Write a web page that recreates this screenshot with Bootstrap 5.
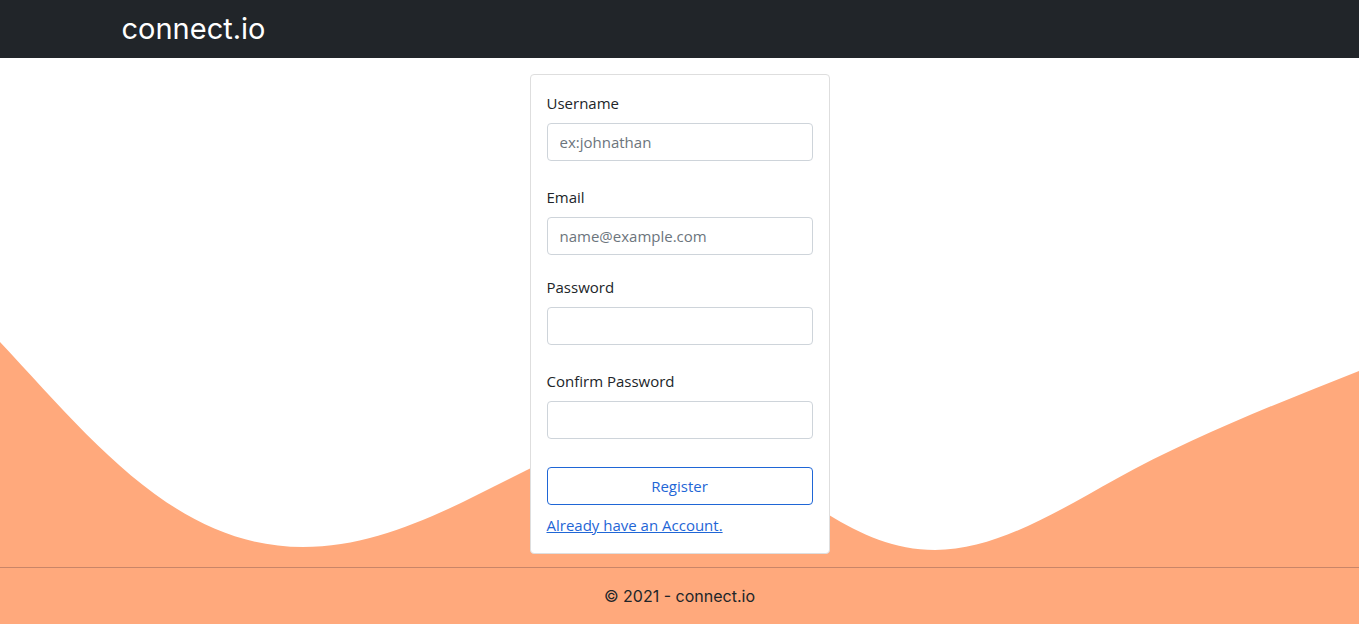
<!DOCTYPE html>
<html lang="en">
<head>
<meta charset="utf-8">
<meta name="viewport" content="width=device-width, initial-scale=1">
<title>Register - connect.io</title>
<link href="https://cdn.jsdelivr.net/npm/bootstrap@5.3.0/dist/css/bootstrap.min.css" rel="stylesheet">
<style>
  body { font-family: "Open Sans", sans-serif; font-size: 15px; line-height: 24px; background: #fff; color: #212529; }
  .brand-font { font-family: Inter, sans-serif; }
  .navbar-brand { font-size: 29px; line-height: 42px; }
  .wave { left: 0; bottom: 0; width: 100%; height: auto; z-index: -1; }
  .register-card { width: 300px; max-width: 100%; border: 1px solid #dedede; border-radius: 4px; }
  .register-form { display: grid; gap: 20px; }
  .field-pair { display: grid; gap: 24px; }
  .form-control, .btn { font-size: 15px; line-height: 24px; border-radius: 4px; }
  .form-control { border-color: #ced4da; }
  .form-control::placeholder { color: #6c757d; }
  .btn-outline-primary { --bs-btn-color: #1f66d6; --bs-btn-border-color: #1f66d6; }
  .signin-link { color: #1f66d6; }
  .page-footer { border-top: 1px solid #c98568; font-size: 16px; }
</style>
</head>
<body class="position-relative d-flex flex-column min-vh-100">
<svg class="wave position-absolute" viewBox="0 0 1359 302" aria-hidden="true">
  <path fill="#ffa97c" d="M0 20C90 116 175 225 303 225C383 225 455 184 529 147C600 112 740 138 829 193C860 212 895 228 935 228C995 228 1055 191 1116 157C1190 116 1275 82 1359 49V302H0Z"/>
</svg>
<nav class="navbar navbar-dark bg-dark py-2">
  <div class="container">
    <a class="navbar-brand brand-font p-0" href="#">connect.io</a>
  </div>
</nav>
<main class="container d-flex justify-content-center mt-3 mb-2">
  <div class="card register-card">
    <div class="card-body p-3">
      <form class="register-form">
        <div class="field-pair">
          <div>
            <label class="form-label mb-2 d-block" for="username">Username</label>
            <input class="form-control" type="text" id="username" placeholder="ex:johnathan">
          </div>
          <div>
            <label class="form-label mb-2 d-block" for="email">Email</label>
            <input class="form-control" type="email" id="email" placeholder="name@example.com">
          </div>
        </div>
        <div class="field-pair">
          <div>
            <label class="form-label mb-2 d-block" for="password">Password</label>
            <input class="form-control" type="password" id="password">
          </div>
          <div>
            <label class="form-label mb-2 d-block" for="confirm">Confirm Password</label>
            <input class="form-control" type="password" id="confirm">
          </div>
        </div>
        <div class="d-flex flex-column gap-2 pt-2">
          <button class="btn btn-outline-primary" type="submit">Register</button>
          <a class="signin-link align-self-start" href="#">Already have an Account.</a>
        </div>
      </form>
    </div>
  </div>
</main>
<footer class="page-footer brand-font mt-auto py-3 text-center">© 2021 - connect.io</footer>
<script src="https://cdn.jsdelivr.net/npm/bootstrap@5.3.0/dist/js/bootstrap.bundle.min.js"></script>
</body>
</html>
